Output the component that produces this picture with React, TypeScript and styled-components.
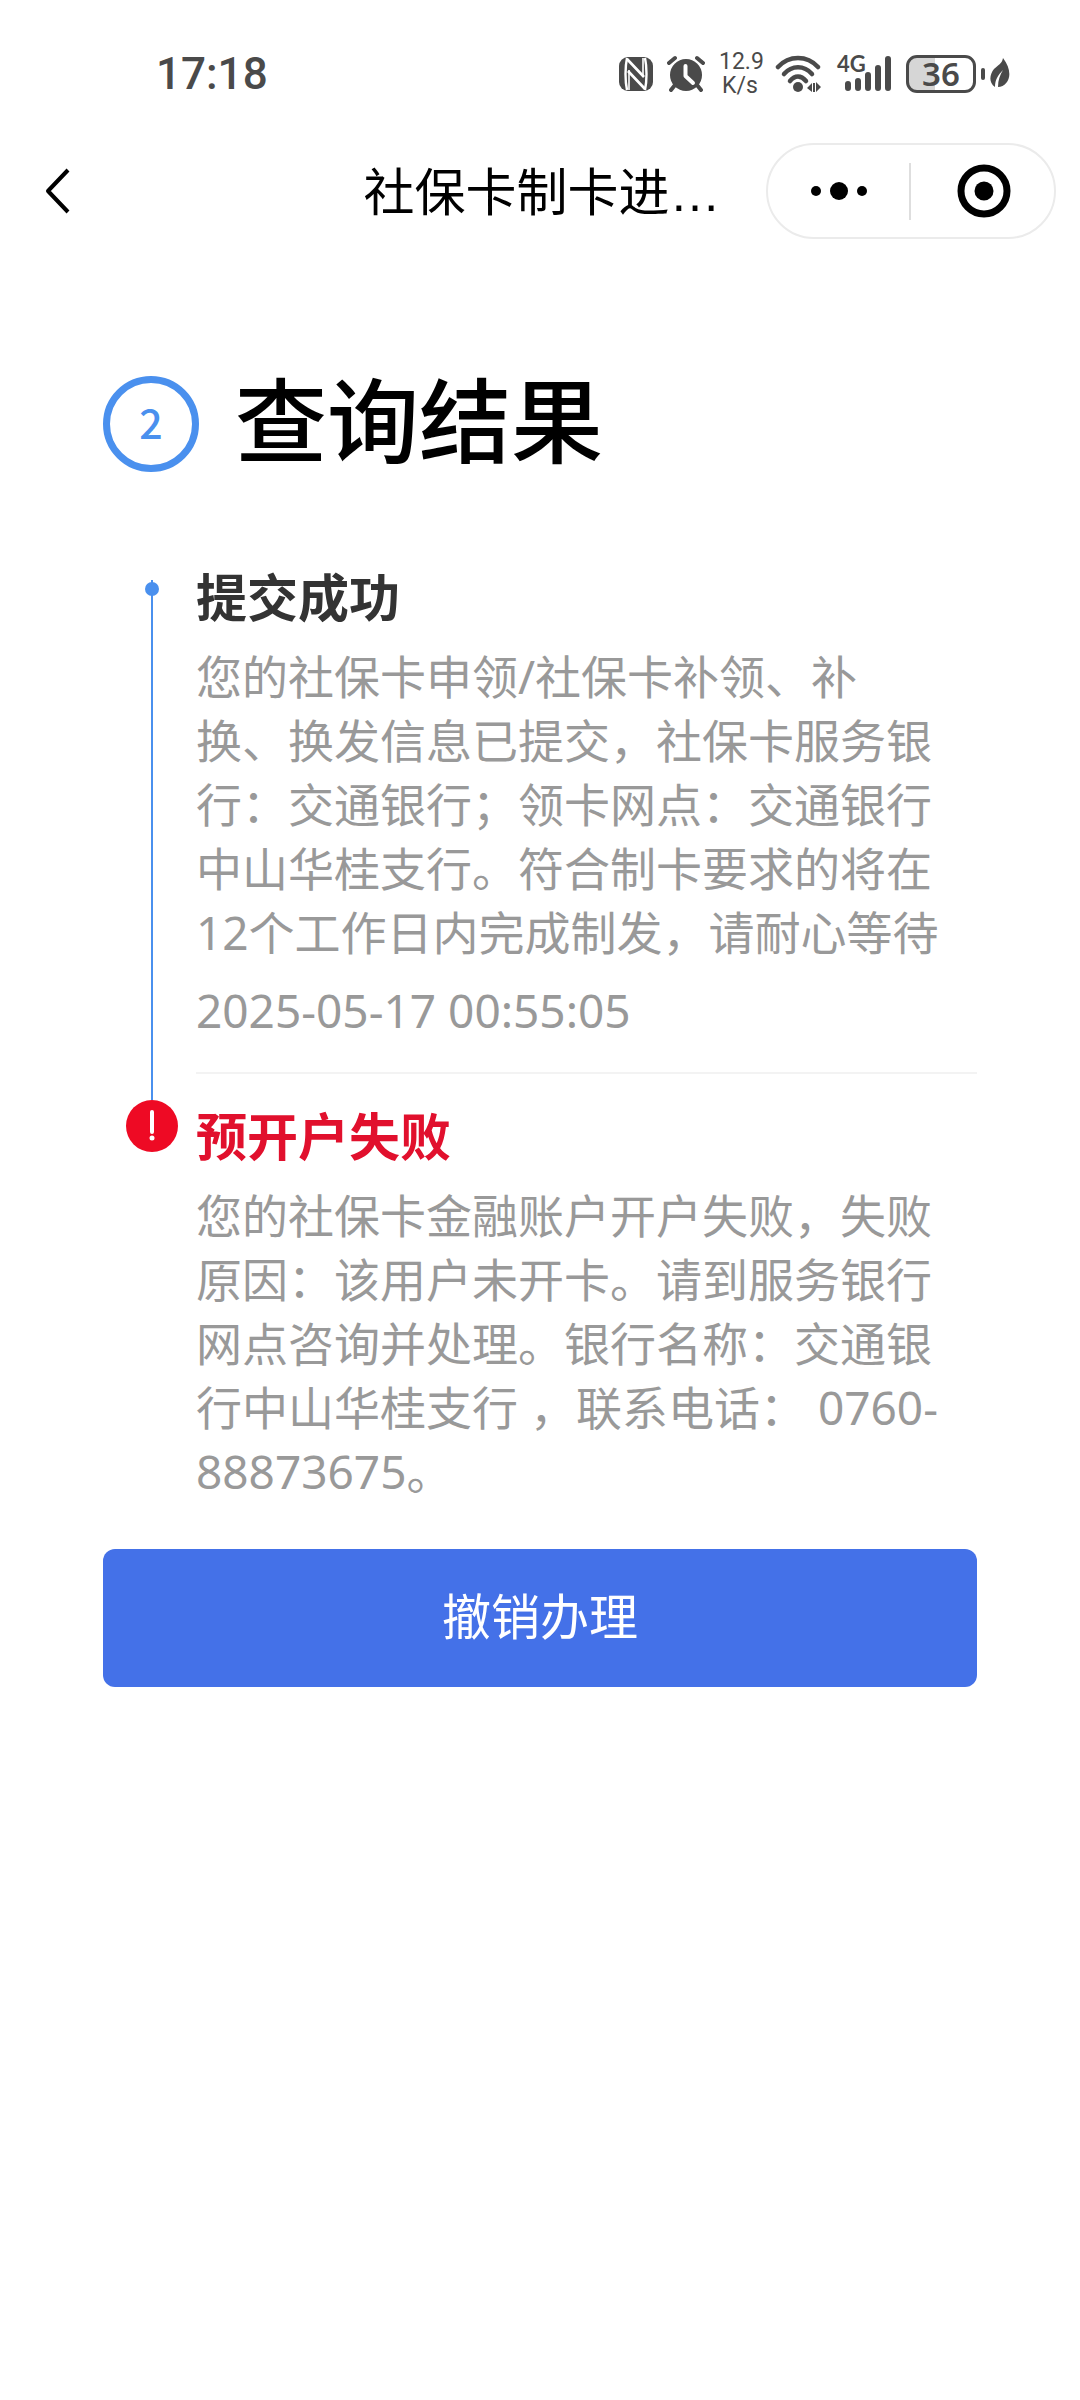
import React from "react";
import styled, { createGlobalStyle } from "styled-components";

const textFont = '"Noto Sans", "Noto Sans CJK SC", sans-serif';
const ink = "#4a4a4a";
const blue = "#4a90ee";
const red = "#ee0a24";

const GlobalStyle = createGlobalStyle`
  *, *::before, *::after { box-sizing: border-box; }
  body {
    margin: 0;
    background: #fff;
    color: #000;
    font-family: ${textFont};
  }
  h1, h2, h3, p, ol { margin: 0; padding: 0; }
  svg { display: block; flex: none; }
`;

const StatusBar = styled.div`
  display: flex;
  align-items: center;
  justify-content: space-between;
  height: 143px;
  padding: 4px 70px 0 156px;
  color: ${ink};
  font-family: Roboto, sans-serif;
`;

const Clock = styled.time`
  font-size: 44px;
  font-weight: 500;
  line-height: 48px;
`;

const StatusIcons = styled.div`
  display: flex;
  align-items: center;
  gap: 14px;
`;

const NetSpeed = styled.div`
  display: flex;
  flex-direction: column;
  width: 42px;
  font-size: 23px;
  line-height: 24px;
  text-align: center;
`;

const Signal = styled.div`
  position: relative;
`;

const SignalType = styled.span`
  position: absolute;
  top: -3px;
  left: 0;
  font-family: Lato, sans-serif;
  font-size: 22px;
  font-weight: 700;
  line-height: 24px;
`;

const BatteryGroup = styled.div`
  display: flex;
  align-items: center;
  gap: 5px;
`;

const Battery = styled.div`
  width: 70px;
  height: 38px;
  border: 3px solid ${ink};
  border-radius: 11px;
  background: linear-gradient(to right, #d6d6d6 40%, transparent 40%);
  font-family: "Noto Sans", sans-serif;
  font-size: 33px;
  font-weight: 600;
  line-height: 32px;
  text-align: center;
`;

const BatteryTip = styled.div`
  width: 4px;
  height: 12px;
  border-radius: 2px;
  background: ${ink};
`;

const NavBar = styled.header`
  display: grid;
  grid-template-columns: 1fr auto 1fr;
  align-items: center;
  height: 96px;
  padding: 0 24px;
`;

const NavTitle = styled.h1`
  padding: 6px 0 0 4px;
  font-family: "Liberation Sans", "Noto Sans CJK SC", sans-serif;
  font-size: 51px;
  font-weight: 400;
  line-height: 72px;
  white-space: nowrap;
`;

const IconButton = styled.button`
  display: flex;
  align-items: center;
  justify-content: center;
  padding: 0;
  border: 0;
  background: none;
  color: #000;
`;

const BackButton = styled(IconButton)`
  justify-self: start;
  width: 68px;
  height: 96px;
`;

const Capsule = styled.div`
  display: flex;
  align-items: center;
  justify-self: end;
  width: 290px;
  height: 96px;
  border: 2px solid #ebebeb;
  border-radius: 48px;
`;

const CapsuleButton = styled(IconButton)`
  flex: 1;
  height: 100%;
`;

const CapsuleDivider = styled.span`
  width: 2px;
  height: 57px;
  margin-right: 2px;
  background: #dedede;
`;

const Main = styled.main`
  padding: 137px 103px 0;
`;

const StepHeader = styled.div`
  display: flex;
  align-items: center;
  gap: 36px;
  height: 96px;
`;

const StepNumber = styled.span`
  flex: none;
  width: 96px;
  height: 96px;
  border: 7px solid ${blue};
  border-radius: 50%;
  color: ${blue};
  font-family: "Noto Sans CJK SC", sans-serif;
  font-size: 41px;
  font-weight: 500;
  line-height: 76px;
  text-align: center;
`;

const StepTitle = styled.h2`
  padding-bottom: 6px;
  font-size: 92px;
  font-weight: 500;
  line-height: 96px;
`;

const Timeline = styled.ol`
  margin-top: 89px;
  list-style: none;
`;

const TimelineItem = styled.li`
  display: grid;
  grid-template-columns: 93px 1fr;
`;

const Rail = styled.div<{ $inset?: boolean }>`
  display: flex;
  flex-direction: column;
  align-items: center;
  padding-top: ${(p) => (p.$inset ? 19 : 0)}px;
  padding-left: 5px;
`;

const RailLine = styled.span`
  position: relative;
  flex: 1;
  width: 2px;
  background: ${blue};
`;

const RailDot = styled.span`
  position: absolute;
  top: 2px;
  left: -6px;
  width: 14px;
  height: 14px;
  border-radius: 50%;
  background: ${blue};
`;

const ItemContent = styled.div`
  padding-top: 4px;
`;

const ItemTitle = styled.h3<{ $failed?: boolean }>`
  margin-bottom: 15px;
  color: ${(p) => (p.$failed ? "#e1102d" : "#333")};
  font-size: 51px;
  font-weight: 700;
  line-height: 64px;
`;

const ItemText = styled.p`
  padding-right: 31px;
  color: #999;
  font-size: 46px;
  line-height: 64px;
`;

const ItemTime = styled.time`
  display: block;
  margin-top: 14px;
  color: #999;
  font-size: 46px;
  line-height: 64px;
`;

const ItemDivider = styled.div`
  height: 2px;
  margin: 30px 0 26px;
  background: #f3f3f3;
`;

const SubmitButton = styled.button`
  display: block;
  width: 100%;
  height: 138px;
  margin-top: 46px;
  padding: 0 0 4px;
  border: 0;
  border-radius: 12px;
  background: #4471e8;
  color: #fff;
  font-family: ${textFont};
  font-size: 49px;
  line-height: 64px;
`;

const NfcIcon = () => (
  <svg width="34" height="34" viewBox="0 0 34 34" aria-hidden="true">
    <rect x="0" y="0" width="34" height="34" rx="9" fill={ink} />
    <path d="M8 1C6 10 6 24 8 33M26 1C28 10 28 24 26 33" fill="none" stroke="#fff" strokeWidth="2.4" />
    <path d="M8 2L25 20M9 14L26 32" fill="none" stroke="#fff" strokeWidth="2.6" />
    <path d="M10 13V33M24 1V20" fill="none" stroke="#fff" strokeWidth="1.6" />
  </svg>
);

const AlarmIcon = () => (
  <svg width="38" height="38" viewBox="0 0 38 38" aria-hidden="true">
    <circle cx="19" cy="20" r="16" fill={ink} />
    <path d="M2 8L8 3M36 8L30 3M8 30L4 35M30 30L34 35" stroke={ink} strokeWidth="4" strokeLinecap="round" />
    <path d="M18.500 11V21L26 28" fill="none" stroke="#fff" strokeWidth="4" strokeLinecap="round" strokeLinejoin="round" />
  </svg>
);

const WifiIcon = () => (
  <svg width="48" height="38" viewBox="0 0 48 38" aria-hidden="true">
    <g fill="none" stroke={ink} strokeWidth="4.500" strokeLinecap="round">
      <path d="M3 12C14 0 32 0 43 12" />
      <path d="M9 19C17 10 29 10 37 19" />
      <path d="M15 26C20 20 26 20 31 26" />
    </g>
    <circle cx="23" cy="32" r="5" fill={ink} />
    <path d="M32 33L37 28V37ZM38 28H40V37H38ZM41 27L46 32L41 37Z" fill={ink} />
  </svg>
);

const SignalIcon = () => (
  <svg width="55" height="38" viewBox="0 0 55 38" aria-hidden="true">
    <g stroke={ink} strokeWidth="6" strokeLinecap="round">
      <path d="M11 29V33M21 26V33M31 20V33M41 13V33M51 4V33" />
    </g>
  </svg>
);

const LeafIcon = () => (
  <svg width="20" height="32" viewBox="0 0 20 32" aria-hidden="true">
    <path d="M13 0C20 9 21 18 17 24C14 28 11 29 8 29C8 22 10 17 13 12C8 17 5 22 5 29C-2 24 0 16 4 11C8 7 12 6 13 0Z" fill={ink} />
  </svg>
);

const BackIcon = () => (
  <svg width="26" height="48" viewBox="0 0 26 48" aria-hidden="true">
    <path d="M23 3L3 24L23 45" fill="none" stroke="currentColor" strokeWidth="4" strokeLinejoin="round" />
  </svg>
);

const MoreIcon = () => (
  <svg width="56" height="18" viewBox="0 0 56 18" aria-hidden="true">
    <circle cx="5" cy="9" r="5" />
    <circle cx="28" cy="9" r="9" />
    <circle cx="51" cy="9" r="5" />
  </svg>
);

const TargetIcon = () => (
  <svg width="54" height="54" viewBox="0 0 54 54" aria-hidden="true">
    <circle cx="27" cy="27" r="23" fill="none" stroke="#000" strokeWidth="7" />
    <circle cx="27" cy="27" r="9.500" />
  </svg>
);

const ErrorIcon = () => (
  <svg width="52" height="52" viewBox="0 0 52 52" aria-hidden="true">
    <circle cx="26" cy="26" r="26" fill={red} />
    <path d="M26 12V32" stroke="#fff" strokeWidth="4" strokeLinecap="round" />
    <circle cx="26" cy="38" r="2.500" fill="#fff" />
  </svg>
);

export default function App() {
  return (
    <>
      <GlobalStyle />
      <StatusBar>
        <Clock>17:18</Clock>
        <StatusIcons>
          <NfcIcon />
          <AlarmIcon />
          <NetSpeed>
            <span>12.9</span>
            <span>K/s</span>
          </NetSpeed>
          <WifiIcon />
          <Signal>
            <SignalType>4G</SignalType>
            <SignalIcon />
          </Signal>
          <BatteryGroup>
            <Battery>36</Battery>
            <BatteryTip />
            <LeafIcon />
          </BatteryGroup>
        </StatusIcons>
      </StatusBar>
      <NavBar>
        <BackButton type="button" aria-label="返回">
          <BackIcon />
        </BackButton>
        <NavTitle>社保卡制卡进…</NavTitle>
        <Capsule>
          <CapsuleButton type="button" aria-label="更多">
            <MoreIcon />
          </CapsuleButton>
          <CapsuleDivider />
          <CapsuleButton type="button" aria-label="关闭">
            <TargetIcon />
          </CapsuleButton>
        </Capsule>
      </NavBar>
      <Main>
        <StepHeader>
          <StepNumber>2</StepNumber>
          <StepTitle>查询结果</StepTitle>
        </StepHeader>
        <Timeline>
          <TimelineItem>
            <Rail $inset>
              <RailLine>
                <RailDot />
              </RailLine>
            </Rail>
            <ItemContent>
              <ItemTitle>提交成功</ItemTitle>
              <ItemText>
                您的社保卡申领/社保卡补领、补换、换发信息已提交，社保卡服务银行：交通银行；领卡网点：交通银行中山华桂支行。符合制卡要求的将在12个工作日内完成制发，请耐心等待
              </ItemText>
              <ItemTime>2025-05-17 00:55:05</ItemTime>
              <ItemDivider />
            </ItemContent>
          </TimelineItem>
          <TimelineItem>
            <Rail>
              <ErrorIcon />
            </Rail>
            <ItemContent>
              <ItemTitle $failed>预开户失败</ItemTitle>
              <ItemText>
                您的社保卡金融账户开户失败，失败原因：该用户未开卡。请到服务银行网点咨询并处理。银行名称：交通银行中山华桂支行 ，联系电话： 0760-88873675。
              </ItemText>
            </ItemContent>
          </TimelineItem>
        </Timeline>
        <SubmitButton type="button">撤销办理</SubmitButton>
      </Main>
    </>
  );
}
